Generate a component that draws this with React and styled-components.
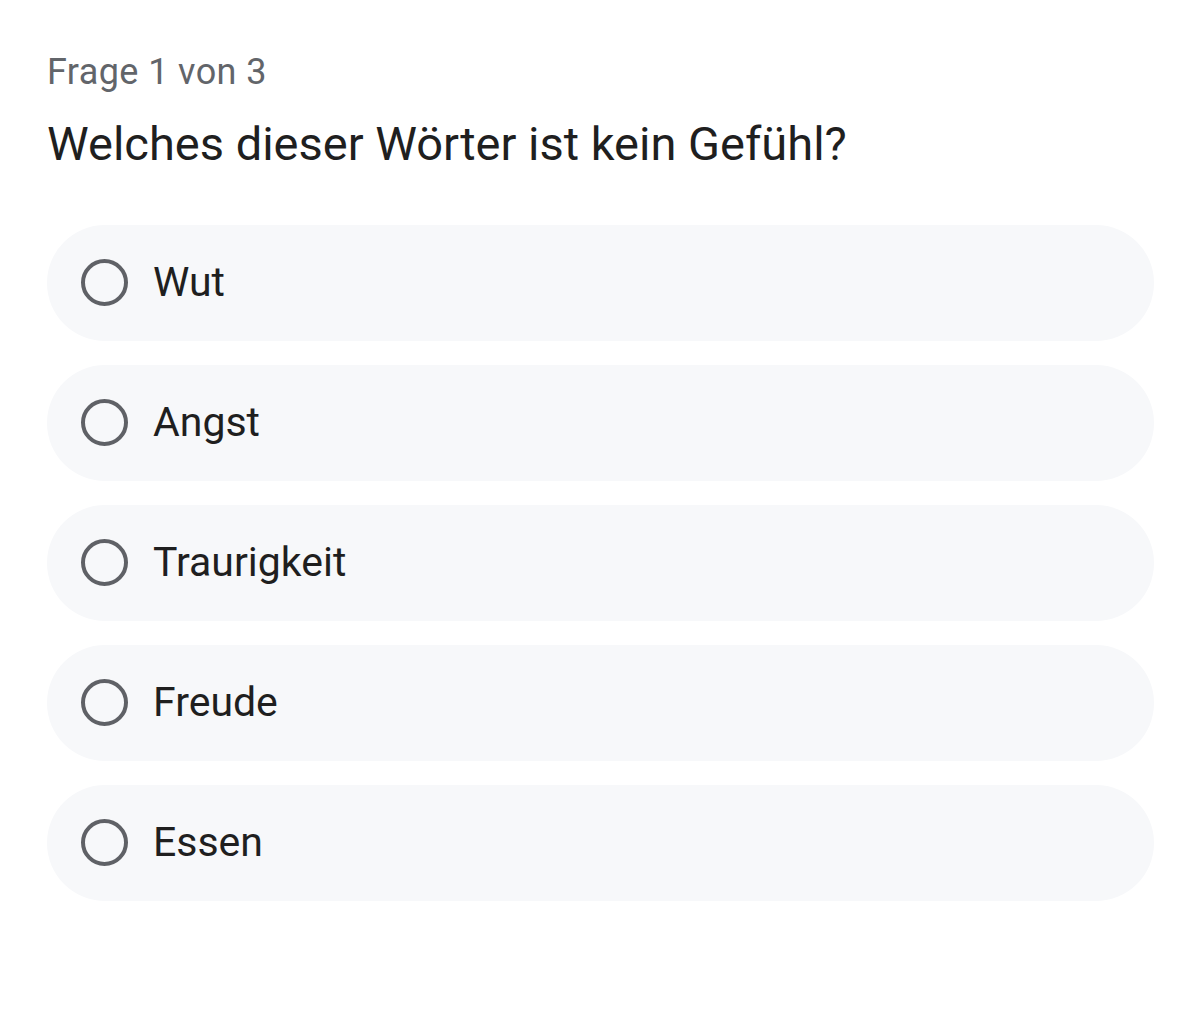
import React from "react";
import styled, { createGlobalStyle } from "styled-components";

const Global = createGlobalStyle`
  html, body { margin: 0; padding: 0; background: #ffffff; }
  body { font-family: Roboto, "Noto Sans", "Liberation Sans", sans-serif; }
`;

const Page = styled.div`
  padding: 52px 46px 40px 47px;
  display: flex;
  flex-direction: column;
`;

const Counter = styled.div`
  font-size: 36px;
  line-height: 40px;
  color: #62656a;
  letter-spacing: 0.4px;
`;

const Question = styled.h1`
  margin: 24px 0 0;
  font-size: 47px;
  line-height: 56px;
  font-weight: 400;
  color: #1f1f1f;
  letter-spacing: 0;
`;

const Options = styled.div`
  margin-top: 53px;
  display: flex;
  flex-direction: column;
  gap: 24px;
`;

const Option = styled.label`
  display: flex;
  align-items: center;
  gap: 25px;
  height: 116px;
  padding: 0 34px;
  border-radius: 58px;
  background: #f7f8fa;
  cursor: pointer;
`;

const Radio = styled.span`
  box-sizing: border-box;
  width: 47px;
  height: 47px;
  margin-top: -1px;
  border-radius: 50%;
  border: 4px solid #5f6166;
  flex: none;
`;

const Label = styled.span`
  font-size: 41px;
  color: #1f1f1f;
  margin-top: -3px;
`;

const answers = ["Wut", "Angst", "Traurigkeit", "Freude", "Essen"];

export default function App() {
  return (
    <>
      <Global />
      <Page>
        <Counter>Frage 1 von 3</Counter>
        <Question>Welches dieser Wörter ist kein Gefühl?</Question>
        <Options>
          {answers.map((a) => (
            <Option key={a}>
              <Radio />
              <Label>{a}</Label>
            </Option>
          ))}
        </Options>
      </Page>
    </>
  );
}
